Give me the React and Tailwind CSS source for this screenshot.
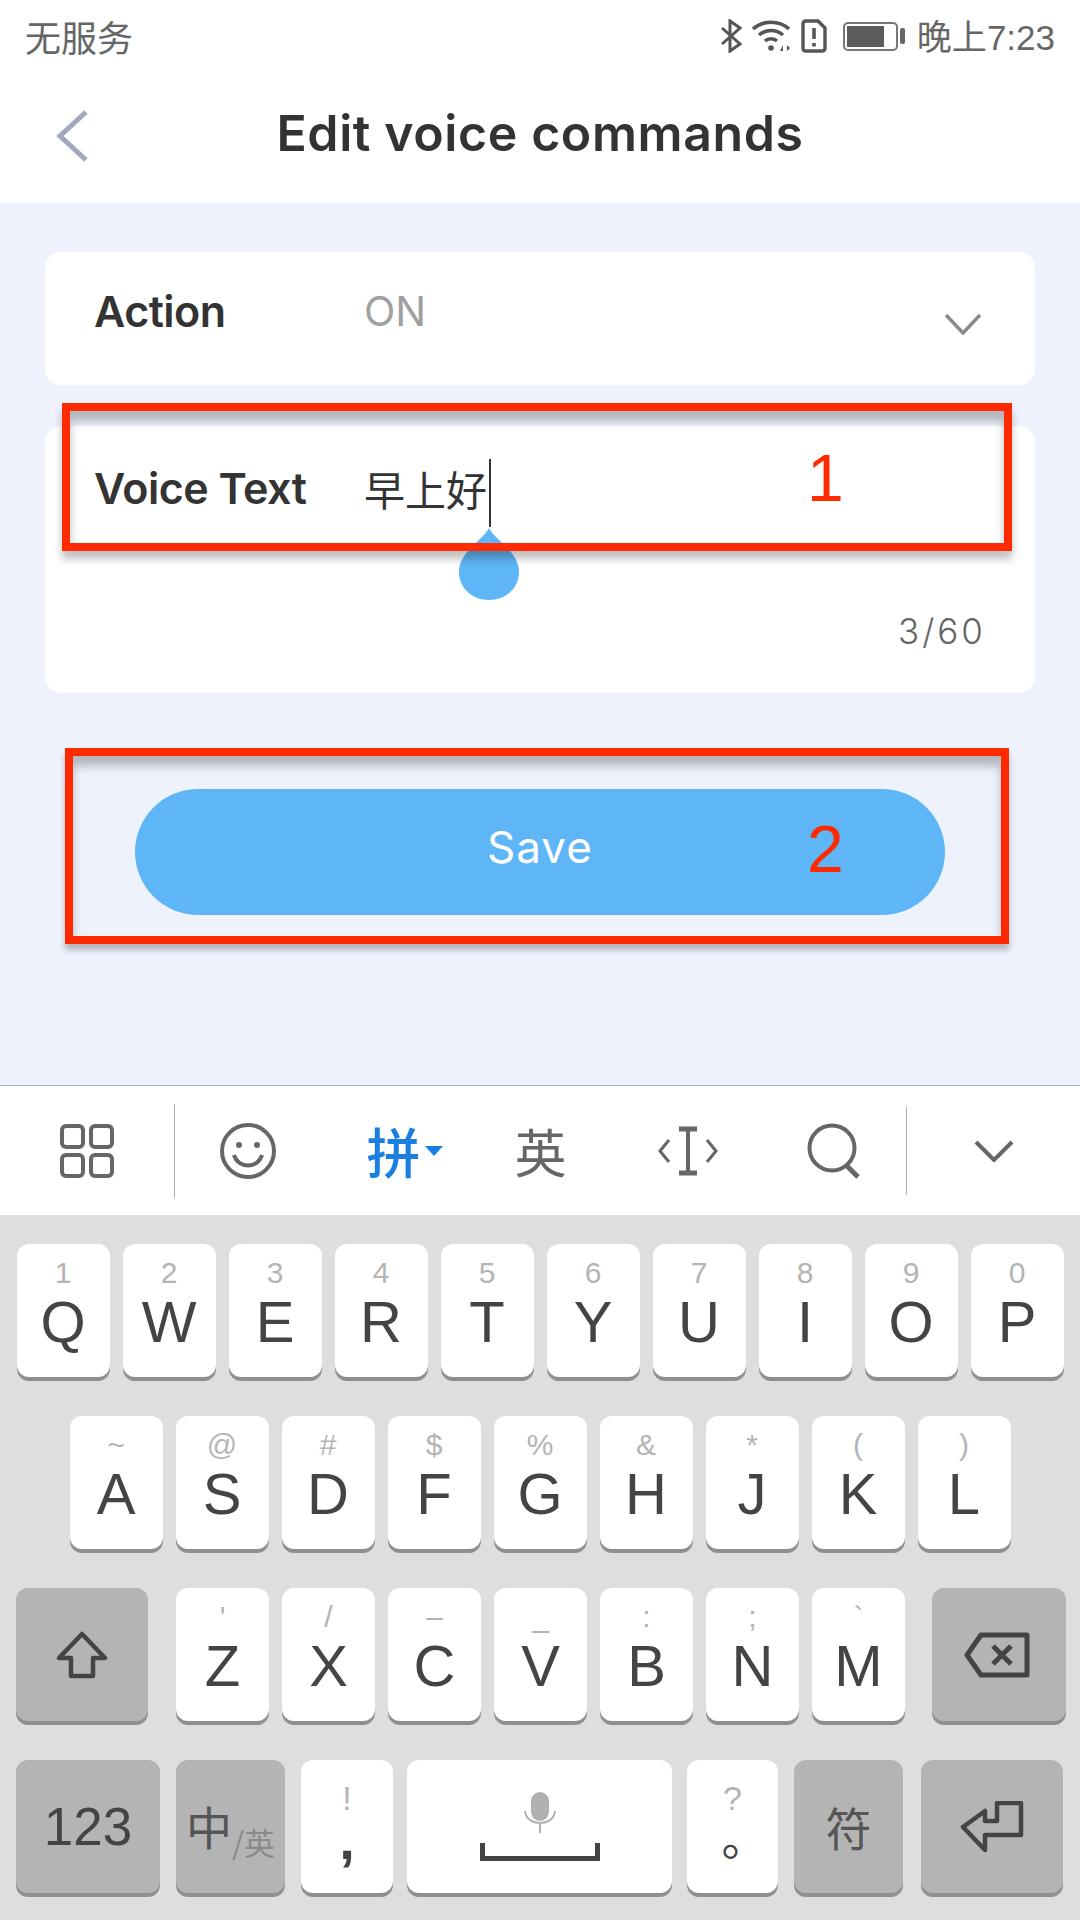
import React from "react";

const sans = "font-['Liberation_Sans','Noto_Sans_CJK_SC',sans-serif]";
const cjk = "font-['Noto_Sans_CJK_SC',sans-serif]";
const ui = "font-['Inter','Noto_Sans_CJK_SC',sans-serif]";

const rowOne = [["1", "Q"], ["2", "W"], ["3", "E"], ["4", "R"], ["5", "T"], ["6", "Y"], ["7", "U"], ["8", "I"], ["9", "O"], ["0", "P"]];
const rowTwo = [["~", "A"], ["@", "S"], ["#", "D"], ["$", "F"], ["%", "G"], ["&", "H"], ["*", "J"], ["(", "K"], [")", "L"]];
const rowThree = [["'", "Z"], ["/", "X"], ["–", "C"], ["_", "V"], [":", "B"], [";", "N"], ["`", "M"]];

function LetterKey({ top, letter }) {
  return (
    <div className={`flex h-[133px] w-[93px] flex-col items-center rounded-[12px] bg-white pt-[9px] shadow-[0_4px_0_#8f8f8f] ${sans}`}>
      <span className="h-[40px] text-[30px] leading-[40px] text-[#b4b4b4]">{top}</span>
      <span className="text-[58px] leading-[58px] text-[#444444]">{letter}</span>
    </div>
  );
}

function DarkKey({ className, children }) {
  return (
    <div className={`flex h-[133px] items-center justify-center rounded-[12px] bg-[#b4b4b4] shadow-[0_4px_0_#8f8f8f] ${className}`}>
      {children}
    </div>
  );
}

function StatusBar() {
  return (
    <div className={`flex h-[76px] items-center justify-between bg-white pb-[4px] pl-[25px] pr-[25px] text-[35px] text-[#666666] ${cjk}`}>
      <span className="text-[36px]">无服务</span>
      <div className="flex items-center">
        <svg width="22" height="34" viewBox="0 0 22 34" fill="none" stroke="#555555" strokeWidth="3">
          <path d="M2 9 L20 25 L10 32 V2 L20 9 L2 25" />
        </svg>
        <svg className="ml-[9px]" width="40" height="34" viewBox="0 0 40 34" fill="none" stroke="#555555" strokeWidth="3.6">
          <path d="M2 10 C12 1 28 1 38 10" />
          <path d="M8 16 C15 10 25 10 32 16" />
          <path d="M14 22 C17 19 23 19 26 22" />
          <circle cx="20" cy="29" r="2.8" fill="#555555" stroke="none" />
          <path d="M29 32 L32 26 V32 Z M36 26 V32 L39 29 Z" fill="#555555" stroke="none" />
        </svg>
        <svg className="ml-[10px]" width="26" height="34" viewBox="0 0 26 34" fill="none">
          <path d="M5 2 H17 L24 9 V29 Q24 32 21 32 H5 Q2 32 2 29 V5 Q2 2 5 2 Z" stroke="#555555" strokeWidth="3.4" />
          <path d="M13 9 V20 M13 24 V27.5" stroke="#555555" strokeWidth="3.6" />
        </svg>
        <div className="ml-[16px] flex h-[29px] w-[55px] items-center rounded-[5px] border-2 border-[#777777] p-[2px]">
          <div className="h-full w-[37px] bg-[#5c5c5c]" />
        </div>
        <div className="ml-[2px] h-[16px] w-[5px] rounded-[2px] bg-[#666666]" />
        <span className={`ml-[12px] leading-none ${cjk}`}>
          晚上<span className={sans}>7:23</span>
        </span>
      </div>
    </div>
  );
}

function KeyboardToolbar() {
  return (
    <div className="flex h-[130px] items-center border-t border-[#aab4cc] bg-white">
      <div className="flex w-[174px] justify-center">
        <svg width="56" height="56" viewBox="0 0 56 56" fill="none" stroke="#666666" strokeWidth="4">
          <rect x="3" y="3" width="21" height="21" rx="4" />
          <rect x="32" y="3" width="21" height="21" rx="4" />
          <rect x="3" y="32" width="21" height="21" rx="4" />
          <rect x="32" y="32" width="21" height="21" rx="4" />
        </svg>
      </div>
      <div className="h-[94px] w-px bg-[#b0b0b0]" />
      <div className="flex w-[145px] justify-center">
        <svg width="56" height="56" viewBox="0 0 56 56" fill="none" stroke="#666666" strokeWidth="4">
          <circle cx="28" cy="28" r="26" />
          <circle cx="19" cy="22" r="3" fill="#666666" stroke="none" />
          <circle cx="37" cy="22" r="3" fill="#666666" stroke="none" />
          <path d="M14 32 C18 46 38 46 42 32" />
        </svg>
      </div>
      <div className="flex w-[147px] items-center justify-center pl-[22px]">
        <span className={`text-[54px] font-medium leading-none text-[#1a7fe0] ${cjk}`}>拼</span>
        <svg className="ml-[4px]" width="18" height="10" viewBox="0 0 18 10">
          <path d="M0 0 H18 L9 10 Z" fill="#1a7fe0" />
        </svg>
      </div>
      <div className={`flex w-[147px] justify-center text-[52px] leading-none text-[#666666] ${cjk}`}>英</div>
      <div className="flex w-[147px] justify-center">
        <svg width="60" height="50" viewBox="0 0 60 50" fill="none" stroke="#666666">
          <path d="M11 14 L2 25 L11 36 M49 14 L58 25 L49 36" strokeWidth="3" />
          <path d="M21 3 H39 M21 47 H39" strokeWidth="5" />
          <path d="M30 3 V47" strokeWidth="4" />
        </svg>
      </div>
      <div className="flex w-[145px] justify-center">
        <svg width="54" height="56" viewBox="0 0 54 56" fill="none" stroke="#666666" strokeWidth="4">
          <circle cx="25" cy="25" r="22.5" />
          <path d="M39 42 L51 54" strokeWidth="5" />
        </svg>
      </div>
      <div className="h-[88px] w-px bg-[#b0b0b0]" />
      <div className="flex flex-1 justify-center">
        <svg width="40" height="22" viewBox="0 0 40 22" fill="none" stroke="#666666" strokeWidth="4">
          <path d="M2 2 L20 20 L38 2" />
        </svg>
      </div>
    </div>
  );
}

function Keyboard() {
  return (
    <div className="flex h-[705px] flex-col gap-[39px] bg-[#dedede] pt-[29px]">
      <div className="flex justify-center gap-[13px]">
        {rowOne.map(([top, letter]) => (
          <LetterKey key={letter} top={top} letter={letter} />
        ))}
      </div>
      <div className="flex justify-center gap-[13px]">
        {rowTwo.map(([top, letter]) => (
          <LetterKey key={letter} top={top} letter={letter} />
        ))}
      </div>
      <div className="flex pl-[16px]">
        <DarkKey className="w-[132px]">
          <svg width="52" height="48" viewBox="0 0 52 48" fill="none" stroke="#444444" strokeWidth="4.5" strokeLinejoin="round">
            <path d="M26 3 L49 27 H37 V45 H15 V27 H3 Z" />
          </svg>
        </DarkKey>
        <div className="ml-[28px] flex gap-[13px]">
          {rowThree.map(([top, letter]) => (
            <LetterKey key={letter} top={top} letter={letter} />
          ))}
        </div>
        <DarkKey className="ml-[27px] w-[134px] pr-[4px]">
          <svg width="66" height="46" viewBox="0 0 66 46" fill="none" stroke="#444444" strokeWidth="5" strokeLinejoin="round">
            <path d="M17 3 H63 V43 H17 L3 23 Z" />
            <path d="M29 14 L47 32 M47 14 L29 32" />
          </svg>
        </DarkKey>
      </div>
      <div className="flex pl-[16px]">
        <DarkKey className={`w-[144px] text-[53px] text-[#444444] ${sans}`}>123</DarkKey>
        <DarkKey className={`ml-[16px] w-[109px] items-end pb-[44px] ${cjk}`}>
          <span className="text-[46px] leading-[48px] text-[#555555]">中</span>
          <span className="mb-[-8px] text-[31px] leading-[30px] text-[#8a8a8a]">/英</span>
        </DarkKey>
        <div className={`ml-[16px] flex h-[133px] w-[92px] flex-col items-center rounded-[12px] bg-white pt-[18px] shadow-[0_4px_0_#8f8f8f] ${sans}`}>
          <span className="h-[35px] text-[34px] leading-[40px] text-[#b4b4b4]">!</span>
          <span className="text-[56px] font-bold leading-[54px] text-[#444444]">,</span>
        </div>
        <div className="ml-[14px] flex h-[133px] w-[265px] flex-col items-center rounded-[12px] bg-white pt-[32px] shadow-[0_4px_0_#8f8f8f]">
          <svg width="32" height="41" viewBox="0 0 32 41" fill="none">
            <rect x="7" y="0" width="18" height="29" rx="9" fill="#b0b0b0" />
            <path d="M1 19 C2 35 30 35 31 19 M16 32 V41" stroke="#b0b0b0" strokeWidth="2" />
          </svg>
          <svg className="mt-[10px]" width="120" height="18" viewBox="0 0 120 18" fill="none" stroke="#444444" strokeWidth="5">
            <path d="M2.5 0 V15.5 H117.5 V0" />
          </svg>
        </div>
        <div className={`ml-[15px] flex h-[133px] w-[91px] flex-col items-center rounded-[12px] bg-white pt-[18px] shadow-[0_4px_0_#8f8f8f] ${sans}`}>
          <span className="h-[30px] text-[34px] leading-[40px] text-[#b4b4b4]">?</span>
          <span className={`relative left-[12px] text-[46px] leading-[54px] text-[#444444] ${cjk}`}>。</span>
        </div>
        <DarkKey className={`ml-[16px] w-[109px] text-[46px] text-[#555555] ${cjk}`}>符</DarkKey>
        <DarkKey className="ml-[18px] w-[142px]">
          <svg width="64" height="52" viewBox="0 0 64 52" fill="none" stroke="#444444" strokeWidth="4.5" strokeLinejoin="round">
            <path d="M37 2 H61 V34 H25 V49 L3 26 L25 10 V20 H37 Z" />
          </svg>
        </DarkKey>
      </div>
    </div>
  );
}

export default function App() {
  return (
    <div className={`relative h-[1920px] w-[1080px] overflow-hidden ${ui}`}>
      <StatusBar />

      {/* Header */}
      <div className="relative flex h-[127px] items-center justify-center bg-white pb-[13px]">
        <svg className="absolute left-[56px] top-[34px]" width="32" height="52" viewBox="0 0 32 52" fill="none" stroke="#a3a7c0" strokeWidth="5">
          <path d="M30 2 L4 26 L30 50" />
        </svg>
        <h1 className="text-[50px] font-semibold leading-none tracking-[0.6px] text-[#333333]">Edit voice commands</h1>
      </div>

      {/* Form */}
      <div className="flex h-[882px] flex-col bg-[#eef2fc] px-[45px] pt-[49px]">
        <div className="flex h-[133px] items-center rounded-[16px] bg-white pb-[14px] pl-[49px] pr-[54px]">
          <span className="w-[270px] text-[43px] font-semibold leading-none tracking-[-0.5px] text-[#333333]">Action</span>
          <span className="flex-1 text-[41px] leading-none text-[#a0a0a0]">ON</span>
          <svg className="mt-[24px]" width="36" height="22" viewBox="0 0 36 22" fill="none" stroke="#8a8a8a" strokeWidth="3.5">
            <path d="M1 2 L18 20 L35 2" />
          </svg>
        </div>
        <div className="mt-[41px] flex h-[267px] flex-col rounded-[16px] bg-white pl-[49px] pr-[49px] pt-[33px]">
          <div className="flex items-center">
            <span className="mb-[10px] w-[270px] text-[43px] font-semibold leading-[48px] tracking-[-0.5px] text-[#333333]">Voice Text</span>
            <span className={`mb-[10px] text-[41px] leading-[48px] text-[#333333] ${cjk}`}>早上好</span>
            <div className="ml-[2px] h-[68px] w-[2px] bg-[#333333]" />
          </div>
          <div className="mt-[87px] self-end text-[35px] font-light leading-none tracking-[3px] text-[#666666]">3/60</div>
        </div>
        <div className="mx-[90px] mt-[96px] flex h-[126px] items-center justify-center rounded-full bg-[#5fb6f7] pb-[10px] text-[44px] font-normal tracking-[1px] text-white">
          Save
        </div>
      </div>

      <div>
        <KeyboardToolbar />
        <Keyboard />
      </div>

      {/* Text cursor handle */}
      <svg className="absolute left-[459px] top-[528px]" width="60" height="73" viewBox="0 0 60 73">
        <path d="M30 0 C36 12 60 24 60 44 C60 60 47 72 30 72 C13 72 0 60 0 44 C0 24 24 12 30 0 Z" fill="#5fb6f7" />
      </svg>

      {/* Red annotations */}
      <div className="absolute left-[62px] top-[403px] h-[148px] w-[950px] border-[8px] border-[#ff2a00] shadow-[0_8px_8px_rgba(0,0,0,0.25),inset_0_10px_10px_rgba(0,0,0,0.25)]" />
      <div className="absolute left-[65px] top-[748px] h-[196px] w-[944px] border-[8px] border-[#ff2a00] shadow-[0_6px_6px_rgba(0,0,0,0.25),inset_0_10px_10px_rgba(0,0,0,0.25)]" />
      <span className={`absolute left-[807px] top-[441px] text-[66px] leading-[74px] text-[#ff2a00] ${sans}`}>1</span>
      <span className={`absolute left-[807px] top-[812px] text-[66px] leading-[74px] text-[#ff2a00] ${sans}`}>2</span>
    </div>
  );
}
